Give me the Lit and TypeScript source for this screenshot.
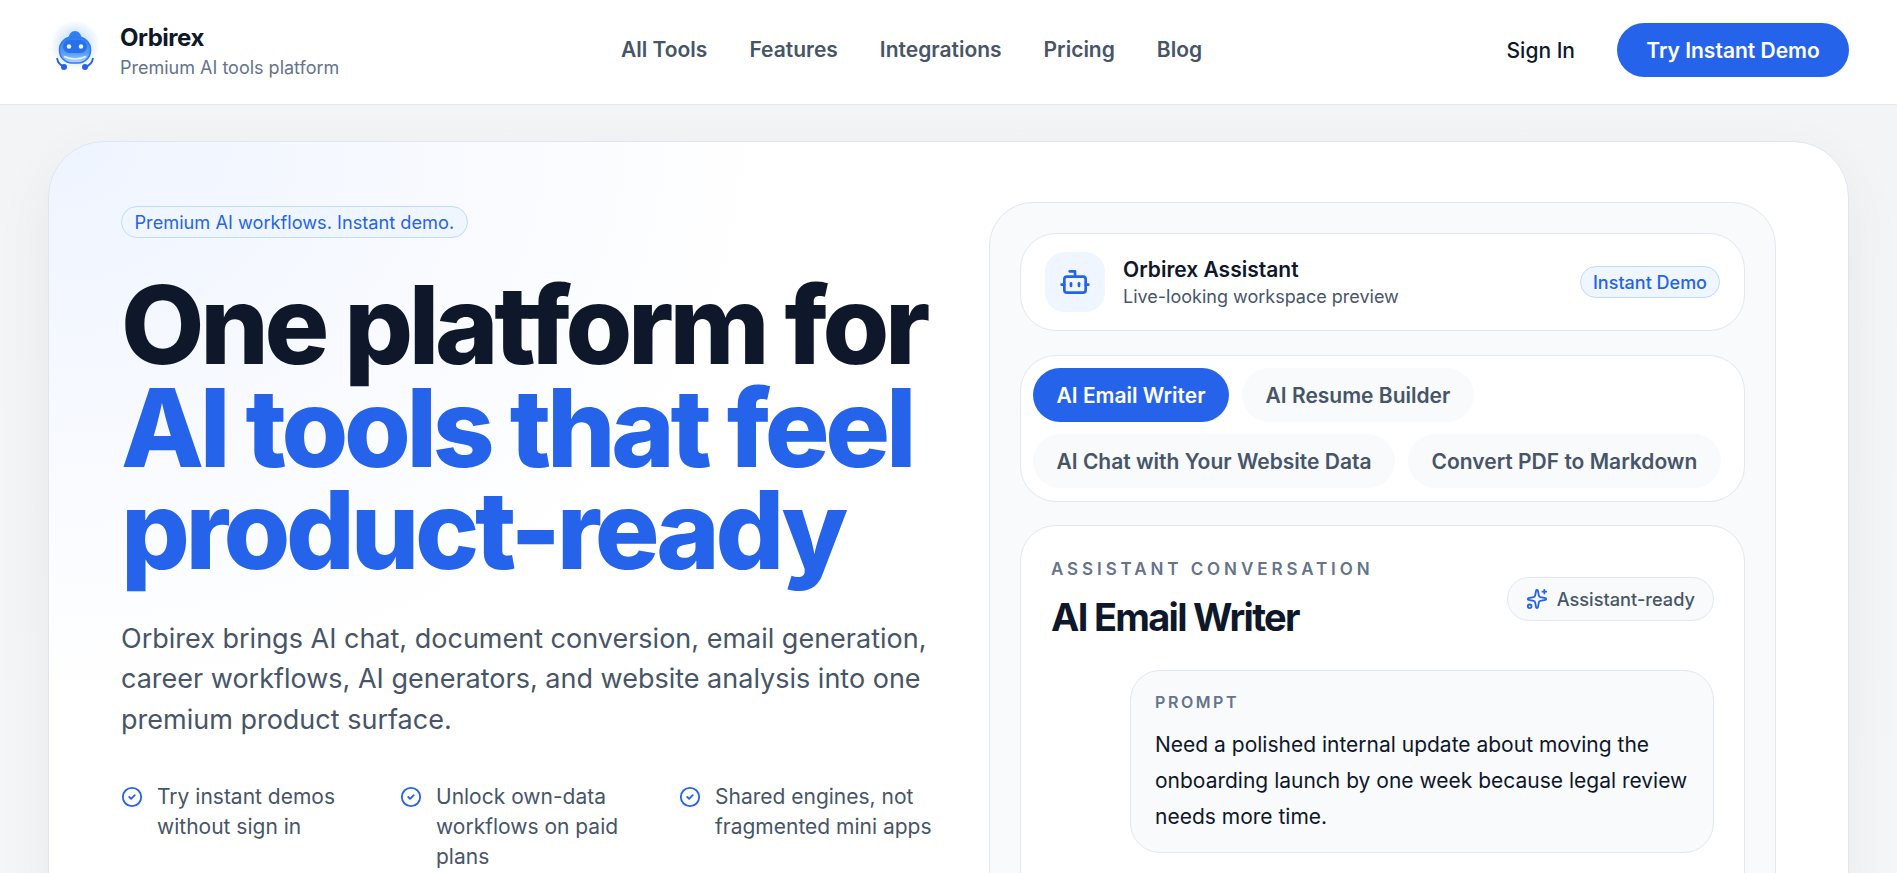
import { LitElement, html, css, svg } from "lit";
import { customElement } from "lit/decorators.js";

const check = html`<svg class="chk" viewBox="0 0 24 24" fill="none" stroke="#2563eb" stroke-width="2" stroke-linecap="round" stroke-linejoin="round"><circle cx="12" cy="12" r="10"></circle><path d="m9 12 2 2 4-4"></path></svg>`;

const logo = html`<svg class="logo" viewBox="0 0 60 60" fill="none">
  <defs>
    <radialGradient id="glow"><stop offset="0" stop-color="#60a5fa" stop-opacity=".5"></stop><stop offset="1" stop-color="#60a5fa" stop-opacity="0"></stop></radialGradient>
    <linearGradient id="body" x1="0" y1="0" x2="0" y2="1"><stop offset="0" stop-color="#2f7bf0"></stop><stop offset=".65" stop-color="#5aa0f8"></stop><stop offset="1" stop-color="#bcd8fd"></stop></linearGradient>
  </defs>
  ${svg`
  <circle cx="30" cy="25" r="25" fill="url(#glow)"></circle>
  <path d="M23.5 19c0-5 3-8 6.500-8s6.500 3 6.500 8z" fill="#2f80f5"></path>
  <rect x="14.500" y="17" width="31" height="26" rx="12.500" fill="url(#body)" stroke="#2f7bf0" stroke-width="1.500"></rect>
  <rect x="18" y="20" width="24" height="13" rx="6.500" fill="#2a70ea"></rect>
  <path d="M19 36.500q11 5 22 0" stroke="#e8f1ff" stroke-width="1.500"></path>
  <circle cx="24" cy="26.500" r="2.200" fill="#eff6ff"></circle><circle cx="36" cy="26.500" r="2.200" fill="#eff6ff"></circle>
  <path d="M12 38q1 7 8 9M48 38q-1 7-8 9" stroke="#2563eb" stroke-width="1.800"></path>
  <circle cx="19" cy="47" r="3" fill="#2563eb"></circle><circle cx="40" cy="47" r="3" fill="#2563eb"></circle>`}
</svg>`;

@customElement("app-root")
export class AppRoot extends LitElement {
  static styles = css`
    :host { display: block; height: 100vh; overflow: hidden; font-family: Inter, "Liberation Sans", sans-serif; color: #0f172a;
      background: linear-gradient(180deg, #f3f4f6, #f5f6f8); }
    * { box-sizing: border-box; }
    p, h1, h2 { margin: 0; }
    header { height: 105px; background: #fff; border-bottom: 1px solid #e2e8f0; display: flex; align-items: center; padding: 0 48px; }
    .brand { display: flex; align-items: center; gap: 15px; width: 573px; margin-left: -3px; flex: none; }
    .logo { width: 60px; height: 60px; flex: none; margin-top: -4px; }
    .brand b { display: block; font-size: 24px; line-height: 30px; font-weight: 700; letter-spacing: -0.02em; }
    .brand span { display: block; font-size: 18px; line-height: 28px; color: #64748b; margin-top: 1px; }
    nav { display: flex; gap: 42px; font-size: 21px; font-weight: 600; color: #475569; margin: -5px 0 0 3px; }
    .actions { display: flex; justify-content: flex-end; align-items: center; gap: 42px; margin: -4px 0 0 auto; }
    .signin { font-size: 21px; font-weight: 500; color: #0f172a; }
    .cta { width: 232px; height: 54px; border-radius: 27px; background: #2563eb; color: #fff; font-size: 21px; font-weight: 600; display: flex; align-items: center; justify-content: center; }
    main { padding: 36px 48px 0; }
    .hero { border: 1px solid #dfe6f0; border-radius: 56px; padding: 60px 72px 40px; display: grid; grid-template-columns: 1fr 787px; gap: 47px; align-items: start;
      background: radial-gradient(900px 700px at 0% 0%, #eef4ff 0%, #f8faff 45%, #ffffff 80%); box-shadow: 0 20px 60px rgba(15, 23, 42, .06); height: 800px; }
    .left { padding-top: 4px; min-width: 0; }
    .pill { display: inline-flex; align-items: center; border: 1px solid #bfdbfe; border-radius: 999px; background: #f0f6ff; color: #2563eb; font-size: 18.200px; height: 32px; padding: 0 12.500px; }
    h1 { font-size: 108px; line-height: 102.600px; font-weight: 800; letter-spacing: -0.04em; margin-top: 36px; white-space: nowrap; }
    h1 em { font-style: normal; color: #2563eb; display: block; }
    .lead { font-size: 27px; line-height: 40.500px; color: #475569; margin-top: 37px; }
    .checks { display: grid; grid-template-columns: repeat(3, 1fr); gap: 16px; margin-top: 42px; }
    .checks div { display: flex; gap: 14px; font-size: 21px; line-height: 30px; color: #475569; }
    .chk { width: 22px; height: 22px; flex: none; margin-top: 4px; }
    .panel { border: 1px solid #e2e8f0; border-radius: 44px; background: #f8fafc; padding: 30px; display: flex; flex-direction: column; gap: 24px; height: 760px; }
    .card { border: 1px solid #e2e8f0; border-radius: 36px; background: #fff; }
    .assistant { height: 98px; display: flex; align-items: center; padding: 0 24px; gap: 18px; flex: none; }
    .ibox { width: 60px; height: 60px; border-radius: 20px; background: #eff6ff; display: flex; align-items: center; justify-content: center; flex: none; }
    .ibox svg { width: 32px; height: 32px; }
    .assistant .t { flex: 1; padding-top: 2px; }
    .assistant b { display: block; font-size: 21px; line-height: 28px; font-weight: 600; }
    .assistant span { display: block; font-size: 18px; line-height: 26px; color: #475569; }
    .demo { height: 32px; border: 1px solid #bfdbfe; background: #eff6ff; color: #2563eb; font-size: 18px; font-weight: 500; border-radius: 16px; padding: 0 12px; display: flex; align-items: center; }
    .tabs { padding: 12px; display: flex; flex-wrap: wrap; gap: 12px 13px; flex: none; height: 147px; align-content: flex-start; }
    .tab { height: 54px; border-radius: 27px; padding: 0 23.500px; font-size: 21px; font-weight: 600; color: #475569; background: #f8fafc; display: flex; align-items: center; white-space: nowrap; }
    .tab.on { background: #2563eb; color: #fff; }
    .conv { padding: 31px 30px 0 30px; flex: 1; margin-top: -1px; }
    .conv-head { display: flex; justify-content: space-between; align-items: flex-start; }
    .eyebrow { font-size: 17px; line-height: 24px; letter-spacing: 0.23em; font-weight: 600; color: #64748b; }
    h2 { font-size: 38px; line-height: 48px; font-weight: 700; letter-spacing: -0.045em; margin-top: 12px; }
    .ready { height: 44px; border: 1px solid #e2e8f0; background: #f8fafc; border-radius: 22px; padding: 0 18px; display: flex; align-items: center; gap: 9px; font-size: 18.200px; font-weight: 500; color: #475569; margin-top: 20px; }
    .ready svg { width: 22px; height: 22px; }
    .prompt { width: 584px; margin: 29px 0 0 auto; height: 183px; border: 1px solid #e2e8f0; border-radius: 30px; background: #f8fafc; padding: 21px 24px; }
    .prompt small { display: block; font-size: 16px; line-height: 20px; letter-spacing: 0.16em; font-weight: 600; color: #64748b; }
    .prompt p { font-size: 21px; line-height: 36px; margin-top: 15px; color: #0f172a; }
  `;

  render() {
    return html`
      <header>
        <div class="brand">${logo}<div><b>Orbirex</b><span>Premium AI tools platform</span></div></div>
        <nav><span>All Tools</span><span>Features</span><span>Integrations</span><span>Pricing</span><span>Blog</span></nav>
        <div class="actions"><span class="signin">Sign In</span><span class="cta">Try Instant Demo</span></div>
      </header>
      <main>
        <section class="hero">
          <div class="left">
            <span class="pill">Premium AI workflows. Instant demo.</span>
            <h1>One platform for<em>AI tools that feel</em><em>product-ready</em></h1>
            <p class="lead">Orbirex brings AI chat, document conversion, email generation, career workflows, AI generators, and website analysis into one premium product surface.</p>
            <div class="checks">
              <div>${check}<span>Try instant demos without sign in</span></div>
              <div>${check}<span>Unlock own-data workflows on paid plans</span></div>
              <div>${check}<span>Shared engines, not fragmented mini apps</span></div>
            </div>
          </div>
          <div class="panel">
            <div class="card assistant">
              <div class="ibox"><svg viewBox="0 0 24 24" fill="none" stroke="#2563eb" stroke-width="2" stroke-linecap="round" stroke-linejoin="round"><path d="M12 8V4H8"></path><rect width="16" height="12" x="4" y="8" rx="2"></rect><path d="M2 14h2"></path><path d="M20 14h2"></path><path d="M15 13v2"></path><path d="M9 13v2"></path></svg></div>
              <div class="t"><b>Orbirex Assistant</b><span>Live-looking workspace preview</span></div>
              <div class="demo">Instant Demo</div>
            </div>
            <div class="card tabs">
              <div class="tab on">AI Email Writer</div><div class="tab">AI Resume Builder</div><div class="tab">AI Chat with Your Website Data</div><div class="tab">Convert PDF to Markdown</div>
            </div>
            <div class="card conv">
              <div class="conv-head">
                <div><div class="eyebrow">ASSISTANT CONVERSATION</div><h2>AI Email Writer</h2></div>
                <div class="ready"><svg viewBox="0 0 24 24" fill="none" stroke="#2563eb" stroke-width="2" stroke-linecap="round" stroke-linejoin="round"><path d="M11.017 2.814a1 1 0 0 1 1.966 0l1.051 5.558a2 2 0 0 0 1.594 1.594l5.558 1.051a1 1 0 0 1 0 1.966l-5.558 1.051a2 2 0 0 0-1.594 1.594l-1.051 5.558a1 1 0 0 1-1.966 0l-1.051-5.558a2 2 0 0 0-1.594-1.594l-5.558-1.051a1 1 0 0 1 0-1.966l5.558-1.051a2 2 0 0 0 1.594-1.594z"></path><path d="M20 2v4"></path><path d="M22 4h-4"></path><circle cx="4" cy="20" r="2"></circle></svg>Assistant-ready</div>
              </div>
              <div class="prompt"><small>PROMPT</small><p>Need a polished internal update about moving the onboarding launch by one week because legal review needs more time.</p></div>
            </div>
          </div>
        </section>
      </main>
    `;
  }
}
